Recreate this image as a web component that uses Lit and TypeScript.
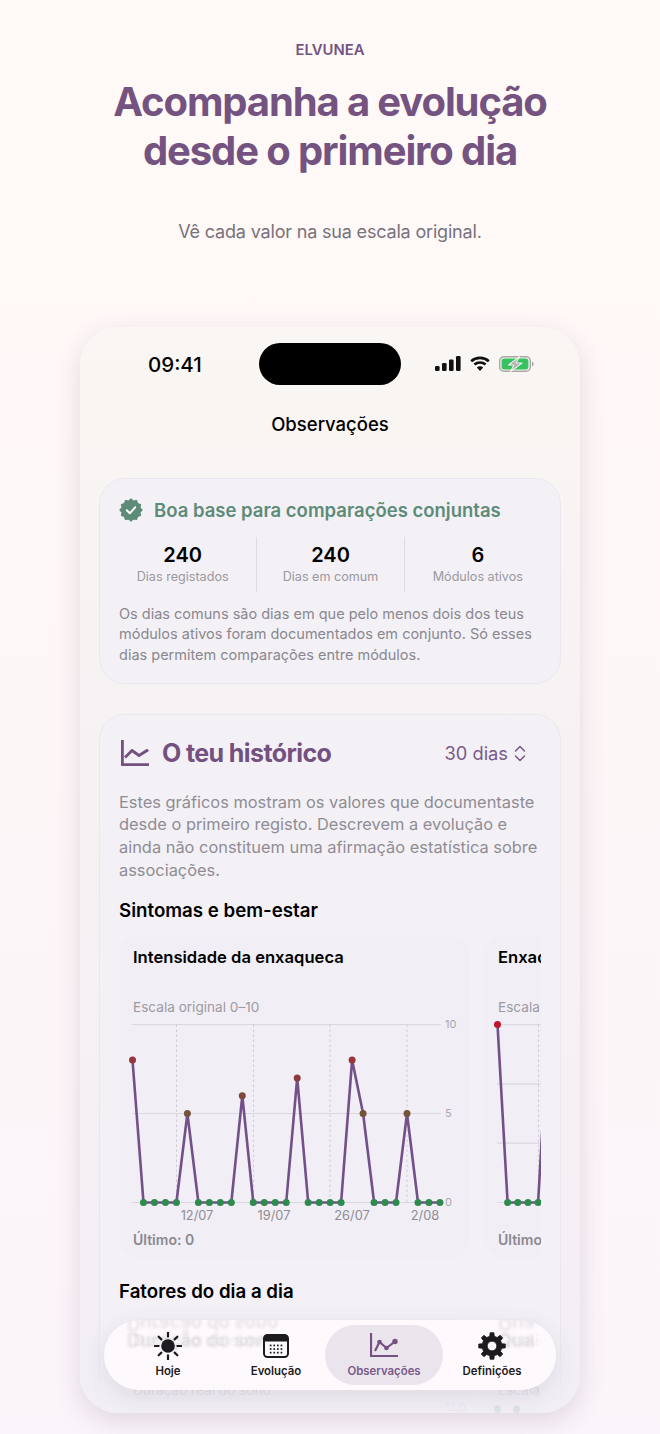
import { LitElement, html, css, svg } from "lit";
import { customElement } from "lit/decorators.js";

type Spec = {
  title: string; sub: string; last: string; max: number; maxLabel: string;
  data: number[]; step: number; hLines: number[]; ticks: [string, number][];
  vLines: number[]; dates: [string, number][]; colors: (v: number) => string;
};

const PX0 = 13.5, Y_TOP = 8.5, Y_BOT = 186.5;
const heat = (v: number) => v === 0 ? "#2e8b4e" : v >= 10 ? "#c0152f" : v >= 8 ? "#96353a" : v === 7 ? "#8c3b3b" : v === 6 ? "#80483c" : "#75553a";

const charts: Spec[] = [
  {
    title: "Intensidade da enxaqueca", sub: "Escala original 0–10", last: "Último: 0", max: 10, maxLabel: "10",
    data: [8,0,0,0,0,5,0,0,0,0,6,0,0,0,0,7,0,0,0,0,8,5,0,0,0,5,0,0,0],
    step: 10.98, hLines: [0, 5, 10], ticks: [["10", 10], ["5", 5], ["0", 0]],
    vLines: [57.5, 134.5, 211, 288], dates: [["12/07", 78], ["19/07", 155], ["26/07", 233], ["2/08", 306]], colors: heat,
  },
  {
    title: "Enxaqueca", sub: "Escala original 0–3", last: "Último: 0", max: 3, maxLabel: "3",
    data: [3,0,0,0,0,3,0,0,0,0,2,0], step: 10.15, hLines: [0, 1, 2, 3], ticks: [],
    vLines: [54.5], dates: [], colors: (v) => v === 3 ? "#c0152f" : v === 0 ? "#2e8b4e" : "#75553a",
  },
];
const charts2: Spec[] = [
  {
    title: "Duração do sono", sub: "Duração real do sono", last: "Último: 7,5", max: 12, maxLabel: "12,0",
    data: [], step: 10.98, hLines: [12], ticks: [["12,0", 12]], vLines: [], dates: [], colors: () => "#2e8b4e",
  },
  {
    title: "Qualidade do sono", sub: "Escala", last: "Último: 3", max: 12, maxLabel: "",
    data: [11.9, 8, 11.9, 8], step: 9.5, hLines: [], ticks: [], vLines: [], dates: [], colors: () => "#2e8b4e",
  },
];

function gearPath(c: number, out: number, root: number, hole: number, n: number) {
  const pts: string[] = [];
  for (let i = 0; i < n; i++) {
    const a = (i * 2 * Math.PI) / n - Math.PI / 2;
    const w = Math.PI / n;
    const p = (r: number, t: number) => `${(c + r * Math.cos(t)).toFixed(2)} ${(c + r * Math.sin(t)).toFixed(2)}`;
    pts.push(p(root, a - w * 0.58), p(out, a - w * 0.36), p(out, a + w * 0.36), p(root, a + w * 0.58));
  }
  return `M${pts.join("L")}Z M${c + hole} ${c}a${hole} ${hole} 0 1 0 ${-2 * hole} 0a${hole} ${hole} 0 1 0 ${2 * hole} 0Z`;
}
function badgePath(c: number, out: number, inner: number, n: number) {
  const pts: string[] = [];
  for (let i = 0; i < n * 2; i++) {
    const a = (i * Math.PI) / n;
    const r = i % 2 ? inner : out;
    pts.push(`${(c + r * Math.cos(a)).toFixed(2)} ${(c + r * Math.sin(a)).toFixed(2)}`);
  }
  return `M${pts.join("L")}Z`;
}

@customElement("app-root")
export class AppRoot extends LitElement {
  static styles = css`
    :host { display: block; height: 1434px; overflow: hidden; font-family: Inter, "Liberation Sans", sans-serif;
      background: linear-gradient(180deg, #fff9f7 0%, #fef7f7 45%, #fbf4fa 100%); color: #000; }
    .hero { display: flex; flex-direction: column; align-items: center; padding-top: 42px; }
    .brand { font-size: 14.8px; line-height: 17px; font-weight: 600; color: #745381; }
    h1 { margin: 17.5px 0 0; font-size: 40px; line-height: 49px; font-weight: 700; letter-spacing: -0.028em; color: #745381; text-align: center; }
    .tag { margin-top: 46px; font-size: 18px; line-height: 22px; letter-spacing: -0.01em; color: #77727c; }
    .phone { position: relative; width: 500px; height: 1086px; margin: 84px auto 0; border-radius: 38px; overflow: hidden;
      background: linear-gradient(180deg, #faf6f3 0%, #f6f2f3 40%, #f2eef5 100%);
      box-shadow: 0 8px 26px rgba(90, 70, 100, 0.17); }
    .status { display: grid; grid-template-columns: 179px 142px 179px; height: 42px; margin-top: 16px; align-items: center; }
    .time { font-size: 20.5px; font-weight: 500; padding-left: 68px; padding-top: 2px; }
    .island { height: 42px; border-radius: 21px; background: #000; }
    .sys { display: flex; justify-content: flex-end; align-items: center; gap: 9px; padding-right: 46px; }
    .screen-title { margin-top: 27px; text-align: center; font-size: 18.5px; line-height: 24px; font-weight: 500; }
    .content { padding: 0 19px; margin-top: 42px; display: flex; flex-direction: column; gap: 30px; }
    .card { background: #f3f1f6; border: 1px solid #ebe7ee; border-radius: 26px; padding: 0 19px; }
    .base { padding-top: 19px; padding-bottom: 18px; }
    .base-head { display: flex; align-items: center; gap: 11px; font-size: 18.5px; line-height: 24px; font-weight: 600; color: #5d8b78; }
    .stats { display: grid; grid-template-columns: repeat(3, 1fr); margin: 15px -10px 0; }
    .stat { display: flex; flex-direction: column; align-items: center; padding: 6px 0 7px; border-left: 1px solid #dfdce3; }
    .stat:first-child { border-left: none; }
    .num { font-size: 20px; line-height: 24px; font-weight: 600; }
    .lab { margin-top: 2px; font-size: 12.6px; line-height: 16px; color: #9b98a0; }
    .note { margin: 12px 0 0; font-size: 14.5px; line-height: 20.5px; color: #8a878f; }
    .hist { padding-top: 23px; padding-bottom: 40px; }
    .hist-head { display: flex; align-items: center; height: 30px; padding: 0 14px 0 2px; gap: 13px; }
    .hist-title { font-size: 25px; line-height: 30px; font-weight: 700; letter-spacing: -0.024em; color: #735080; flex: 1; }
    .range { display: flex; align-items: center; gap: 6px; font-size: 18.3px; color: #7a5a88; margin-right: 1px; }
    .desc { margin: 22.5px 0 0; font-size: 16.4px; line-height: 22.7px; color: #8f8c94; }
    .section { margin: 17.5px 0 0; font-size: 18.7px; line-height: 24px; font-weight: 600; }
    .section.next { margin-top: 22px; }
    .row { display: flex; gap: 14px; margin-top: 12px; overflow: hidden; }
    .section.next + .row { margin-top: 14px; }
    .chart { flex: none; width: 351px; height: 323px; box-sizing: border-box; padding-top: 11px; border-radius: 20px; background: #f1eef5; }
    .c-title { padding-left: 14px; font-size: 16.6px; line-height: 22px; font-weight: 600; white-space: nowrap; }
    .c-sub { margin-top: 30px; padding-left: 14px; font-size: 13.6px; line-height: 18px; color: #9d9aa2; white-space: nowrap; }
    .plot { display: block; margin: 0; font-family: Inter, sans-serif; }
    .c-last { margin-top: 3px; padding-left: 14px; font-size: 14px; line-height: 18px; font-weight: 600; color: #8b8890; white-space: nowrap; }
    .fade { position: absolute; left: 0; right: 0; bottom: 0; height: 95px; pointer-events: none;
      background: linear-gradient(180deg, rgba(242,238,245,0) 0%, rgba(242,238,245,.45) 55%, rgba(242,238,245,.85) 80%, rgba(242,238,245,.9) 100%); }
    .nav { position: absolute; left: 24px; bottom: 23px; width: 452px; height: 70px; box-sizing: border-box; padding: 5px 10px; border-radius: 35px;
      display: grid; grid-template-columns: repeat(4, 108px); overflow: hidden;
      background: rgba(253, 249, 253, 0.96); box-shadow: 0 6px 22px rgba(90, 70, 100, 0.12); }
    .ghost { position: absolute; font-size: 18.5px; font-weight: 600; line-height: 20px; color: #8a878f; filter: blur(1.4px); white-space: nowrap; }
    .flip { transform: scaleY(-1); opacity: .2; }
    .plain { opacity: .24; }
    .g1 { left: 23px; top: -6px; }
    .g2 { left: 394px; top: -6px; }
    .g3 { left: 23px; top: 10px; }
    .g4 { left: 394px; top: 10px; }
    .item { position: relative; display: flex; flex-direction: column; align-items: center; padding-top: 7px; height: 60px; box-sizing: border-box; color: #1d1b20; }
    .item.active { margin: 0 -5px; border-radius: 30px; background: #eae4ed; color: #7a5a88; }
    .ic { display: block; width: 28px; height: 28px; }
    .item span { margin-top: 3px; font-size: 11.4px; line-height: 16px; font-weight: 600; }
  `;

  private chart(s: Spec) {
    const y = (v: number) => Y_BOT - (v / s.max) * (Y_BOT - Y_TOP);
    const x = (i: number) => PX0 + i * s.step;
    const pts = s.data.map((v, i) => `${x(i).toFixed(1)},${y(v).toFixed(1)}`).join(" ");
    return html`<div class="chart">
      <div class="c-title">${s.title}</div>
      <div class="c-sub">${s.sub}</div>
      <svg class="plot" width="351" height="212" viewBox="0 0 351 212">
        ${s.hLines.map((h) => svg`<line x1="13" x2="322" y1=${y(h)} y2=${y(h)} stroke="#dad7de" stroke-width="1.2"/>`)}
        ${s.vLines.map((v) => svg`<line x1=${v} x2=${v} y1=${Y_TOP} y2=${Y_BOT} stroke="#cfccd3" stroke-width="1" stroke-dasharray="2.5 2.5"/>`)}
        ${s.ticks.map(([t, v]) => svg`<text x="326" y=${y(v) + 3.5} font-size="11" fill="#a9a6ae">${t}</text>`)}
        ${s.dates.map(([t, cx]) => svg`<text x=${cx} y="203.500" text-anchor="middle" font-size="12.800" fill="#8f8c94">${t}</text>`)}
        ${s.data.length ? svg`<polyline points=${pts} fill="none" stroke="#735089" stroke-width="2.600" stroke-linejoin="round"/>` : ""}
        ${s.data.map((v, i) => svg`<circle cx=${x(i)} cy=${y(v)} r="3.500" fill=${s.colors(v)}/>`)}
      </svg>
      <div class="c-last">${s.last}</div>
    </div>`;
  }

  render() {
    const rays = [0, 45, 90, 135, 180, 225, 270, 315];
    const dots: [number, number][] = [];
    for (let r = 0; r < 3; r++) for (let c = 0; c < 4; c++) dots.push([8.6 + c * 3.6, 13.4 + r * 3.6]);
    return html`
      <div class="hero">
        <div class="brand">ELVUNEA</div>
        <h1>Acompanha a evolução<br />desde o primeiro dia</h1>
        <div class="tag">Vê cada valor na sua escala original.</div>
      </div>
      <div class="phone">
        <div class="status">
          <div class="time">09:41</div>
          <div class="island"></div>
          <div class="sys">
            <svg width="26" height="15" viewBox="0 0 26 15"><g fill="#111">
              <rect x="0" y="10" width="4.6" height="5" rx="1.2"/><rect x="7" y="7" width="4.6" height="8" rx="1.2"/>
              <rect x="14" y="3.5" width="4.6" height="11.5" rx="1.2"/><rect x="21" y="0" width="4.6" height="15" rx="1.2"/></g></svg>
            <svg width="20" height="15" viewBox="0 0 20 15"><g fill="none" stroke="#111" stroke-width="2.6">
              <path d="M1.2 5.200C6 .8 14 .8 18.800 5.200"/><path d="M4.400 8.600c3.200-2.800 8-2.800 11.200 0"/></g>
              <path d="M10 15l-3.200-3.600c1.800-1.500 4.600-1.500 6.400 0z" fill="#111"/></svg>
            <svg width="35" height="16" viewBox="0 0 35 16">
              <rect x=".7" y=".7" width="30.600" height="14.600" rx="4.200" fill="none" stroke="#a9a7a4" stroke-width="1.400"/>
              <rect x="2.600" y="2.600" width="26.800" height="10.800" rx="2.600" fill="#35c25f"/>
              <path d="M33 5.500c1.200.4 1.600 1.300 1.600 2.500s-.4 2.100-1.600 2.500z" fill="#a9a7a4"/>
              <path d="M20.500 .6L9.500 9h5.500l-3.500 6.600L23 7h-6z" fill="#b0aeaa" stroke="#f0f4ee" stroke-width="1.100" stroke-linejoin="round"/>
            </svg>
          </div>
        </div>
        <div class="screen-title">Observações</div>
        <div class="content">
          <div class="card base">
            <div class="base-head">
              <svg width="24" height="24" viewBox="0 0 24 24">
                <path d=${badgePath(12, 11, 9.2, 12)} fill="#5d8b78" stroke="#5d8b78" stroke-width="1.200" stroke-linejoin="round"/>
                <path d="M7.800 12.300l3 3 5.400-6" fill="none" stroke="#fff" stroke-width="2" stroke-linecap="round" stroke-linejoin="round"/>
              </svg>
              Boa base para comparações conjuntas
            </div>
            <div class="stats">
              <div class="stat"><div class="num">240</div><div class="lab">Dias registados</div></div>
              <div class="stat"><div class="num">240</div><div class="lab">Dias em comum</div></div>
              <div class="stat"><div class="num">6</div><div class="lab">Módulos ativos</div></div>
            </div>
            <p class="note">Os dias comuns são dias em que pelo menos dois dos teus módulos ativos foram documentados em conjunto. Só esses dias permitem comparações entre módulos.</p>
          </div>
          <div class="card hist">
            <div class="hist-head">
              <svg width="28" height="26" viewBox="0 0 28 26" fill="none" stroke="#735080" stroke-width="2.800">
                <path d="M1.400 0v24.600H28"/>
                <path d="M4 17.500l7-7 7 5 8-5" stroke-linejoin="round"/>
                <circle cx="26" cy="10.500" r="1.600" fill="#735080" stroke="none"/>
              </svg>
              <div class="hist-title">O teu histórico</div>
              <div class="range">30 dias
                <svg width="12" height="17" viewBox="0 0 12 17" fill="none" stroke="#7a5a88" stroke-width="1.600" stroke-linecap="round" stroke-linejoin="round">
                  <path d="M1.500 6L6 1.500 10.500 6"/><path d="M1.500 11L6 15.500 10.500 11"/>
                </svg>
              </div>
            </div>
            <p class="desc">Estes gráficos mostram os valores que documentaste desde o primeiro registo. Descrevem a evolução e ainda não constituem uma afirmação estatística sobre associações.</p>
            <div class="section">Sintomas e bem-estar</div>
            <div class="row">${charts.map((c) => this.chart(c))}</div>
            <div class="section next">Fatores do dia a dia</div>
            <div class="row">${charts2.map((c) => this.chart(c))}</div>
          </div>
        </div>
        <div class="fade"></div>
        <nav class="nav">
          <div class="ghost flip g1" aria-hidden="true">Duração do sono</div>
          <div class="ghost flip g2" aria-hidden="true">Qua</div>
          <div class="ghost plain g3" aria-hidden="true">Duração do sono</div>
          <div class="ghost plain g4" aria-hidden="true">Qua</div>
          <div class="item">
            <svg class="ic" viewBox="0 0 28 28">
              <circle cx="14" cy="14" r="6.800" fill="#1d1b20"/>
              ${rays.map((r) => svg`<line x1="14" y1="0.800" x2="14" y2="4.600" stroke="#1d1b20" stroke-width="2.200" stroke-linecap="round" transform="rotate(${r} 14 14)"/>`)}
            </svg>
            <span>Hoje</span>
          </div>
          <div class="item">
            <svg class="ic" viewBox="0 0 28 28">
              <rect x="2" y="3" width="24" height="22" rx="3.500" fill="#fdf9fd" stroke="#1d1b20" stroke-width="2"/>
              <path d="M2 7a4 4 0 0 1 4-4h16a4 4 0 0 1 4 4v2.500H2z" fill="#1d1b20"/>
              ${dots.map(([x, y]) => svg`<rect x=${x - 0.8} y=${y - 0.8} width="1.700" height="1.700" fill="#1d1b20"/>`)}
            </svg>
            <span>Evolução</span>
          </div>
          <div class="item active">
            <svg class="ic" viewBox="0 0 28 28" fill="none" stroke="#735080" stroke-width="2.200">
              <path d="M1 1v23h27"/>
              <path d="M5 19l4.500-9 7 6 8.500-6.500" stroke-linejoin="round"/>
              <circle cx="9.500" cy="10" r="2.300" fill="#735080" stroke="none"/>
              <circle cx="16.500" cy="16" r="2.300" fill="#735080" stroke="none"/>
              <circle cx="25" cy="9.500" r="2.700" fill="#735080" stroke="none"/>
            </svg>
            <span>Observações</span>
          </div>
          <div class="item">
            <svg class="ic" viewBox="0 0 28 28">
              <path d=${gearPath(14, 13.4, 10, 4.8, 8)} fill="#1d1b20" fill-rule="evenodd" stroke="#1d1b20" stroke-width=".8" stroke-linejoin="round"/>
            </svg>
            <span>Definições</span>
          </div>
        </nav>
      </div>
    `;
  }
}
